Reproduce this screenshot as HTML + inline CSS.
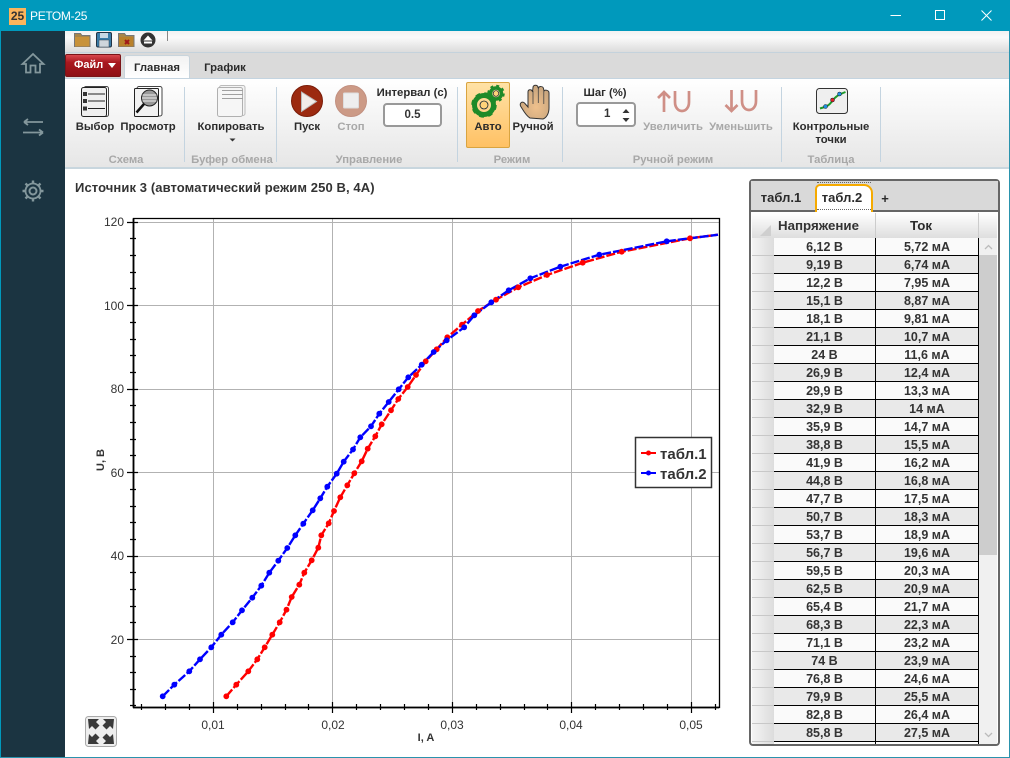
<!DOCTYPE html>
<html><head><meta charset="utf-8">
<style>
html,body{margin:0;padding:0;width:1010px;height:758px;overflow:hidden;background:#fff}
body{position:relative;font-family:"Liberation Sans",sans-serif;color:#2b2b2b}
.a{position:absolute}
.t{position:absolute;white-space:nowrap;font-weight:bold;font-size:11.3px;line-height:14px;transform:translateX(-50%);color:#2b2b2b}
.g{color:#a8a8a8}
.sep{position:absolute;top:87px;height:75px;width:1px;background:#c4d4e0}
.r{position:absolute;left:774px;width:205px;height:18px;box-sizing:border-box;border-bottom:1px solid #000;display:flex;font-weight:bold;font-size:12.5px;line-height:18px;color:#333;text-align:center}
.r b{flex:none;width:101px;border-right:1px solid #000;display:block}
.r i{flex:none;font-style:normal;display:block;width:102px;border-right:1px solid #000}
.e{background:#e9e9e9}.o{background:#fafafa}
svg{position:absolute;overflow:visible}
.m circle{r:2.9px}
</style></head><body>
<!-- frame -->
<div class="a" style="left:0;top:0;width:1010px;height:31px;background:#0099bc"></div>
<div class="a" style="left:0;top:31px;width:65px;height:727px;background:#1b3441;border-left:1px solid #0099bc;box-sizing:border-box"></div>
<div class="a" style="left:0;top:757px;width:1010px;height:1px;background:#2a93ad"></div>
<div class="a" style="left:1009px;top:31px;width:1px;height:727px;background:#2a93ad"></div>
<div class="a" style="left:9px;top:8px;width:17px;height:17px;background:#fbb55c;color:#333;font:bold 12px/17px 'Liberation Sans',sans-serif;text-align:center">25</div>
<div class="a" style="left:30px;top:8px;color:#fff;font-size:12px;line-height:17px;letter-spacing:-.3px">РЕТОМ-25</div>
<svg style="left:880px;top:0" width="130" height="31" fill="none" stroke="#fff" stroke-width="1"><path d="M10.500 15.500H21"/><rect x="55.500" y="10.500" width="9" height="9"/><path d="M101.500 10.500l10 10M111.500 10.500l-10 10"/></svg>
<!-- sidebar icons -->
<svg style="left:0;top:0" width="65" height="210" fill="none" stroke="#83979c" stroke-width="2"><path d="M22.500 64L33 54 43.500 64H40V72.500H35.500V65.500H30.500V72.500H26V64Z" stroke-width="1.800"/><path d="M24 122H43M24 122l4-3M24 122l4 3M23 132.500H43M43 132.500l-4-3M43 132.500l-4 3" stroke-width="1.800"/><circle cx="33" cy="191" r="3.500"/><circle cx="33" cy="191" r="7.500" stroke-width="1.800"/><path d="M33 180.500v3M33 198.500v3M22.500 191h3M40.500 191h3M25.500 183.500l2.200 2.200M38.300 196.300l2.200 2.200M40.500 183.500l-2.200 2.200M27.700 196.300l-2.200 2.200" stroke-width="2.400"/></svg>
<!-- quick toolbar -->
<div class="a" style="left:65px;top:31px;width:944px;height:22px;background:linear-gradient(#f2f2f2,#fafafa 30%,#dcdcdc);border-bottom:1px solid #c4d2dc;box-sizing:border-box"></div>
<div class="a" style="left:167px;top:31px;width:1px;height:10px;background:#888"></div>
<svg style="left:0;top:0" width="170" height="50"><path d="M74.500 33.500h6l1.500 2h8v11h-15.500z" fill="#a8864a" stroke="#777"/><path d="M75 37h14.500v9.500H75z" fill="#c8923a"/>
<rect x="96.500" y="32.500" width="15" height="14.500" rx="1.500" fill="#3a7ca8" stroke="#234"/><rect x="100" y="33" width="8" height="5" fill="#c8d8e4"/><rect x="99" y="40" width="10" height="7" fill="#cfd6dc" stroke="#345" stroke-width=".5"/>
<path d="M118.500 33.500h6l1.500 2h8v11h-15.500z" fill="#a8864a" stroke="#777"/><path d="M119 37h14.500v9.500H119z" fill="#b9812b"/><path d="M125 40l4 4M129 40l-4 4" stroke="#a01818" stroke-width="2"/>
<circle cx="148" cy="40" r="7.500" fill="#333"/><path d="M148 35.500l4.500 5h-9z" fill="#fff"/><rect x="144" y="41.500" width="8" height="2" fill="#fff"/></svg>
<!-- tab row -->
<div class="a" style="left:65px;top:53px;width:944px;height:25px;background:#dadada"></div>
<div class="a" style="left:65px;top:54px;width:56px;height:23px;box-sizing:border-box;border:1px solid #7a1418;border-radius:2px;background:linear-gradient(#d8474d 0,#a9181f 35%,#8e1015 100%);color:#fff;font:bold 11px/20px 'Liberation Sans',sans-serif;padding-left:8px">Файл</div>
<svg style="left:108px;top:63px" width="10" height="6"><path d="M0 0h8l-4 5z" fill="#fff"/></svg>
<div class="a" style="left:124px;top:55px;width:66px;height:24px;box-sizing:border-box;border:1px solid #c8d4dc;border-bottom:0;border-radius:3px 3px 0 0;background:linear-gradient(#f2f2f2,#fff)"></div>
<div class="t" style="left:157px;top:61px">Главная</div>
<div class="t" style="left:225px;top:61px">График</div>
<!-- ribbon -->
<div class="a" style="left:65px;top:78px;width:944px;height:91px;box-sizing:border-box;border-top:1px solid #c4d4e0;border-bottom:2px solid #c8d6de;background:linear-gradient(#fff,#e6e6e6)"></div>
<div class="sep" style="left:184px"></div><div class="sep" style="left:276px"></div><div class="sep" style="left:457px"></div><div class="sep" style="left:562px"></div><div class="sep" style="left:781px"></div><div class="sep" style="left:880px"></div>
<div class="a" style="left:466px;top:82px;width:44px;height:66px;box-sizing:border-box;border:1px solid #d9a440;border-radius:2px;background:linear-gradient(#ffe2a6,#ffc164)"></div>
<svg style="left:0;top:0" width="1010" height="170">
<defs><radialGradient id="hg" cx=".55" cy=".65" r=".6"><stop offset="0" stop-color="#efc08c"/><stop offset="1" stop-color="#c9a67e"/></radialGradient></defs>
<!-- Выбор -->
<rect x="84" y="86.500" width="24.500" height="30" rx="2" fill="#fff" stroke="#444"/>
<rect x="81.500" y="87.500" width="25" height="29" rx="2" fill="#efefef" stroke="#222"/>
<g fill="#333"><rect x="83" y="92" width="4" height="4"/><rect x="83" y="99" width="4" height="4"/><rect x="83" y="106.500" width="4" height="4"/></g>
<path d="M88 94h17M88 101h17M88 108.500h17" stroke="#222" stroke-width="1"/>
<!-- Просмотр -->
<rect x="137" y="86.500" width="25" height="29.500" rx="2" fill="#fff" stroke="#444"/>
<rect x="134.500" y="88.500" width="24" height="28" rx="1" fill="#f2f2f2" stroke="#222"/>
<circle cx="149.500" cy="98" r="8" fill="#999" stroke="#222"/><path d="M142.500 95h14M142 98h15M142.500 101h14" stroke="#eee"/><path d="M144 104l-7.500 8.500" stroke="#111" stroke-width="2.500"/>
<!-- Копировать -->
<rect x="219.500" y="85.500" width="25.500" height="30" rx="2" fill="#f4f4f4" stroke="#bbb"/><rect x="217.500" y="87.500" width="25" height="29" rx="2" fill="#f6f6f6" stroke="#b0b0b0"/><path d="M222 90.500h21M222 94.500h21M222 98.500h21" stroke="#a0a0a0"/>
<path d="M229.500 138.500h6l-3 3z" fill="#333"/>
<!-- Пуск -->
<circle cx="307" cy="101" r="15.500" fill="#9c2a10" stroke="#7a1c08"/><path d="M301.500 92l15 9.500-15 10z" fill="#f2ece8" stroke="#bbb"/>
<!-- Стоп -->
<circle cx="351" cy="101" r="15.500" fill="#cc9a86" stroke="#c29080"/><rect x="343.500" y="93" width="15" height="15" rx="1" fill="#eee" stroke="#ddd"/>
<!-- Авто gears -->
<circle cx="484" cy="105" r="9.500" fill="none" stroke="#1e8a28" stroke-width="5"/>
<circle cx="484" cy="105" r="11" fill="none" stroke="#1e8a28" stroke-width="3.500" stroke-dasharray="4.500 4.140"/>
<circle cx="484" cy="105" r="4" fill="#ffd27a" stroke="#123" stroke-width=".8"/>
<circle cx="496" cy="93.500" r="5.500" fill="none" stroke="#1e8a28" stroke-width="3.500"/>
<circle cx="496" cy="93.500" r="7.500" fill="none" stroke="#1e8a28" stroke-width="2.500" stroke-dasharray="2.900 2.990"/>
<circle cx="496" cy="93.500" r="2.800" fill="#ffd27a" stroke="#123" stroke-width=".7"/>
<!-- Ручной hand -->
<path d="M530 118C526 116 523 110 520.500 106C519.500 103 522 101 524.500 103L528 107L528 92C528 89 532 89 532.500 92L533 87.500C533 84.500 538 84.500 538 87.500L538.500 88C539 86 543 86 543.500 88.500L544 91C545 89.500 549 90 549 93L549 108C549 114 546 118 543 119Z" fill="url(#hg)" stroke="#333"/>
<path d="M533 91v13M538.300 88v15M543.800 91v13" stroke="#444" stroke-width=".8" fill="none"/>
<!-- up / down U -->
<g fill="none" stroke="#cf8f86" stroke-width="2.700"><path d="M664 112V92M658 98l6-6 6 6"/><path d="M675 91v11c0 12 14 12 14 0V91"/>
<path d="M731.500 90v21M725.500 105l6 6 6-6"/><path d="M742 90v11c0 12 14 12 14 0V90"/></g>
<!-- control points -->
<rect x="816.500" y="88.500" width="31" height="25" rx="3" fill="#efefef" stroke="#333"/>
<path d="M820 108.500c6-2 8-2 12-7 3-5 7-7 13.500-9.500" fill="none" stroke="#1e9a2a" stroke-width="2"/>
<circle cx="825.500" cy="106.500" r="2" fill="#2090e0" stroke="#123" stroke-width=".5"/><circle cx="832.500" cy="100" r="2" fill="#e02020" stroke="#123" stroke-width=".5"/><circle cx="839.500" cy="94" r="2" fill="#2090e0" stroke="#123" stroke-width=".5"/>
</svg>
<div class="t" style="left:95px;top:120px">Выбор</div>
<div class="t" style="left:148px;top:120px">Просмотр</div>
<div class="t" style="left:231px;top:120px">Копировать</div>
<div class="t" style="left:307px;top:120px">Пуск</div>
<div class="t g" style="left:351px;top:120px">Стоп</div>
<div class="t" style="left:412px;top:86px">Интервал (с)</div>
<div class="a" style="left:383px;top:103px;width:59px;height:24px;box-sizing:border-box;border:2px solid #999;border-radius:4px;background:#fff;text-align:center;font:bold 11.5px/20px 'Liberation Sans',sans-serif;color:#333">0.5</div>
<div class="t" style="left:488px;top:120px">Авто</div>
<div class="t" style="left:533px;top:120px">Ручной</div>
<div class="t" style="left:605px;top:86px">Шаг (%)</div>
<div class="a" style="left:576px;top:102px;width:60px;height:25px;box-sizing:border-box;border:2px solid #999;border-radius:4px;background:#fff;font:bold 11.5px/21px 'Liberation Sans',sans-serif;color:#333;padding-left:26px">1</div>
<svg style="left:0;top:0" width="640" height="130"><path d="M622.500 113l3.500-4 3.500 4zM622.500 118l3.500 4 3.500-4z" fill="#333"/></svg>
<div class="t g" style="left:673px;top:120px">Увеличить</div>
<div class="t g" style="left:741px;top:120px">Уменьшить</div>
<div class="t" style="left:831px;top:120px">Контрольные</div>
<div class="t" style="left:831px;top:133px">точки</div>
<div class="t g" style="left:126px;top:153px">Схема</div>
<div class="t g" style="left:232px;top:153px">Буфер обмена</div>
<div class="t g" style="left:369px;top:153px">Управление</div>
<div class="t g" style="left:512px;top:153px">Режим</div>
<div class="t g" style="left:673px;top:153px">Ручной режим</div>
<div class="t g" style="left:831px;top:153px">Таблица</div>
<!-- title -->
<div class="a" style="left:75px;top:180px;font-weight:bold;font-size:13px;letter-spacing:.1px;line-height:15px;white-space:nowrap;color:#333">Источник 3 (автоматический режим 250 В, 4А)</div>
<!-- chart -->
<svg style="left:0;top:0" width="760" height="758">
<g stroke="#b2b2b2" stroke-width="1" fill="none"><path d="M213.500 218V707M332.500 218V707M452.500 218V707M571.500 218V707M691.500 218V707"/><path d="M133 222.500H719M133 305.500H719M133 389.500H719M133 472.500H719M133 556.500H719M133 639.500H719"/></g>
<path d="M133.500 218.500H719.500V707.500H133.500Z" fill="none" stroke="#000" stroke-width="1.300"/>
<g stroke="#000" stroke-width="1.200" fill="none">
<path d="M133.500 707.500V218.500" stroke-width="1.800"/><path d="M133 707.500H719" stroke-width="1.800"/>
<path d="M127 222.500h11M127 305.500h11M127 389.500h11M127 472.500h11M127 556.500h11M127 639.500h11"/>
<path d="M130 238.500h6M130 255.500h6M130 272.500h6M130 288.500h6M130 322.500h6M130 339.500h6M130 355.500h6M130 372.500h6M130 405.500h6M130 422.500h6M130 439.500h6M130 455.500h6M130 489.500h6M130 506.500h6M130 522.500h6M130 539.500h6M130 572.500h6M130 589.500h6M130 606.500h6M130 622.500h6M130 656.500h6M130 672.500h6M130 689.500h6M130 705.500h6"/>
<path d="M213.500 702v11M332.500 702v11M452.500 702v11M571.500 702v11M691.500 702v11"/>
<path d="M141.500 704v6M165.500 704v6M189.500 704v6M237.500 704v6M261.500 704v6M285.500 704v6M308.500 704v6M356.500 704v6M380.500 704v6M404.500 704v6M428.500 704v6M476.500 704v6M500.500 704v6M524.500 704v6M547.500 704v6M595.500 704v6M619.500 704v6M643.500 704v6M667.500 704v6M715.500 704v6"/>
</g>
<g font-family="Liberation Sans,sans-serif" font-size="12" fill="#333" text-anchor="end"><text x="124" y="226">120</text><text x="124" y="310">100</text><text x="124" y="393">80</text><text x="124" y="477">60</text><text x="124" y="560">40</text><text x="124" y="644">20</text></g>
<g font-family="Liberation Sans,sans-serif" font-size="12" fill="#333" text-anchor="middle"><text x="213" y="729">0,01</text><text x="333" y="729">0,02</text><text x="452" y="729">0,03</text><text x="571" y="729">0,04</text><text x="691" y="729">0,05</text></g>
<text x="426" y="741" font-family="Liberation Sans,sans-serif" font-size="11" font-weight="bold" fill="#333" text-anchor="middle">I, A</text>
<text transform="translate(104,460) rotate(-90)" font-family="Liberation Sans,sans-serif" font-size="11" font-weight="bold" fill="#333" text-anchor="middle">U, B</text>
<g fill="none" stroke-width="2.400" stroke-dasharray="9 2">
<polyline stroke="#f00" points="226.300,696.300 236.300,684.700 248.300,671.300 257.300,659.300 264.700,647.300 272.300,634.700 279.700,622.300 286.500,609.700 291.700,597 299.300,584.700 304.300,572.700 311.700,560.300 318.300,547.700 321.300,535.300 328.700,523.300 334,511 340.300,497.300 347.300,485.300 354.300,473.300 361.700,461.300 367.700,448.700 375.300,436.300 381.700,424.300 391,410.300 398.300,399 407.700,387 416,375 425.700,361.300 436.700,349.300 447.300,337.300 462,324.700 478,311 496,299.700 518.300,287.300 547,275 582.700,262.700 621.700,251.700 690,238.300 718,234.700"/>
<polyline stroke="#00f" points="162.700,696.300 174.300,684.700 189.300,671.300 200,659.300 211.300,647.300 221.300,634.700 232.700,622.300 242,610.300 252.300,597.700 261.300,585.700 269.300,572.700 278.300,560.700 287.300,548 295.300,535.300 303.300,523.700 312.700,510.300 320.300,498.300 327.300,486.700 336.700,473.700 343.700,461.700 353,449.500 360.300,437.300 371,426.300 379.300,413.700 388.700,402 398.700,389.300 408.300,377.300 421.700,364.700 433.700,352 446.700,340.300 464.200,327.300 474.300,315.300 491.300,302.300 508.700,290.300 530.300,278.300 560.300,266.700 599.300,254.700 621,250.500 666.700,241.300 690,238.300 718,234.700"/>
</g>
<g class="m" fill="#f00"><circle cx="226.300" cy="696.300" r="2.600"/><circle cx="236.300" cy="684.700" r="2.600"/><circle cx="248.300" cy="671.300" r="2.600"/><circle cx="257.300" cy="659.300" r="2.600"/><circle cx="264.700" cy="647.300" r="2.600"/><circle cx="272.300" cy="634.700" r="2.600"/><circle cx="279.700" cy="622.300" r="2.600"/><circle cx="286.500" cy="609.700" r="2.600"/><circle cx="291.700" cy="597" r="2.600"/><circle cx="299.300" cy="584.700" r="2.600"/><circle cx="304.300" cy="572.700" r="2.600"/><circle cx="311.700" cy="560.300" r="2.600"/><circle cx="318.300" cy="547.700" r="2.600"/><circle cx="321.300" cy="535.300" r="2.600"/><circle cx="328.700" cy="523.300" r="2.600"/><circle cx="334" cy="511" r="2.600"/><circle cx="340.300" cy="497.300" r="2.600"/><circle cx="347.300" cy="485.300" r="2.600"/><circle cx="354.300" cy="473.300" r="2.600"/><circle cx="361.700" cy="461.300" r="2.600"/><circle cx="367.700" cy="448.700" r="2.600"/><circle cx="375.300" cy="436.300" r="2.600"/><circle cx="381.700" cy="424.300" r="2.600"/><circle cx="391" cy="410.300" r="2.600"/><circle cx="398.300" cy="399" r="2.600"/><circle cx="407.700" cy="387" r="2.600"/><circle cx="416" cy="375" r="2.600"/><circle cx="425.700" cy="361.300" r="2.600"/><circle cx="436.700" cy="349.300" r="2.600"/><circle cx="447.300" cy="337.300" r="2.600"/><circle cx="462" cy="324.700" r="2.600"/><circle cx="478" cy="311" r="2.600"/><circle cx="496" cy="299.700" r="2.600"/><circle cx="518.300" cy="287.300" r="2.600"/><circle cx="547" cy="275" r="2.600"/><circle cx="582.700" cy="262.700" r="2.600"/><circle cx="621.700" cy="251.700" r="2.600"/><circle cx="690" cy="238.300" r="2.600"/></g>
<g class="m" fill="#00f"><circle cx="162.700" cy="696.300" r="2.600"/><circle cx="174.300" cy="684.700" r="2.600"/><circle cx="189.300" cy="671.300" r="2.600"/><circle cx="200" cy="659.300" r="2.600"/><circle cx="211.300" cy="647.300" r="2.600"/><circle cx="221.300" cy="634.700" r="2.600"/><circle cx="232.700" cy="622.300" r="2.600"/><circle cx="242" cy="610.300" r="2.600"/><circle cx="252.300" cy="597.700" r="2.600"/><circle cx="261.300" cy="585.700" r="2.600"/><circle cx="269.300" cy="572.700" r="2.600"/><circle cx="278.300" cy="560.700" r="2.600"/><circle cx="287.300" cy="548" r="2.600"/><circle cx="295.300" cy="535.300" r="2.600"/><circle cx="303.300" cy="523.700" r="2.600"/><circle cx="312.700" cy="510.300" r="2.600"/><circle cx="320.300" cy="498.300" r="2.600"/><circle cx="327.300" cy="486.700" r="2.600"/><circle cx="336.700" cy="473.700" r="2.600"/><circle cx="343.700" cy="461.700" r="2.600"/><circle cx="353" cy="449.500" r="2.600"/><circle cx="360.300" cy="437.300" r="2.600"/><circle cx="371" cy="426.300" r="2.600"/><circle cx="379.300" cy="413.700" r="2.600"/><circle cx="388.700" cy="402" r="2.600"/><circle cx="398.700" cy="389.300" r="2.600"/><circle cx="408.300" cy="377.300" r="2.600"/><circle cx="421.700" cy="364.700" r="2.600"/><circle cx="433.700" cy="352" r="2.600"/><circle cx="446.700" cy="340.300" r="2.600"/><circle cx="464.200" cy="327.300" r="2.600"/><circle cx="474.300" cy="315.300" r="2.600"/><circle cx="491.300" cy="302.300" r="2.600"/><circle cx="508.700" cy="290.300" r="2.600"/><circle cx="530.300" cy="278.300" r="2.600"/><circle cx="560.300" cy="266.700" r="2.600"/><circle cx="599.300" cy="254.700" r="2.600"/><circle cx="666.700" cy="241.300" r="2.600"/></g>
<rect x="635.500" y="437.500" width="76" height="50" fill="#fff" stroke="#333" stroke-width="1.500"/>
<path d="M641 453h15" stroke="#f00" stroke-width="2"/><circle cx="648.500" cy="453" r="2.500" fill="#f00"/>
<path d="M641 473h15" stroke="#00f" stroke-width="2"/><circle cx="648.500" cy="473" r="2.500" fill="#00f"/>
<g font-family="Liberation Sans,sans-serif" font-size="15" font-weight="bold" fill="#333"><text x="660" y="459">табл.1</text><text x="660" y="479">табл.2</text></g>
<rect x="85.500" y="716.500" width="31" height="30" rx="3" fill="#eee" stroke="#aaa"/>
<g fill="#3a3a3a"><path d="M88 719h11l-3 3 3.500 3.500-4 4L92 726l-3 3z"/><path d="M114 719h-11l3 3-3.500 3.500 4 4L110 726l3 3z"/><path d="M88 744h11l-3-3 3.500-3.500-4-4L92 737l-3-3z"/><path d="M114 744h-11l3-3-3.500-3.500 4-4L110 737l3-3z"/></g>
</svg>
<!-- table panel -->
<div class="a" style="left:749px;top:179px;width:251px;height:567px;box-sizing:border-box;border:2px solid #666;border-radius:4px;background:#fff"></div>
<div class="a" style="left:751px;top:181px;width:247px;height:30px;background:#d9d9d9"></div>
<div class="a" style="left:751px;top:210px;width:247px;height:2px;background:#666"></div>
<div class="a" style="left:815px;top:184px;width:58px;height:28px;box-sizing:border-box;border:2px solid #f5aa00;border-bottom:0;border-radius:5px 9px 0 0;background:#fff"></div>
<div class="a" style="left:817px;top:182px;width:54px;height:28px;box-sizing:border-box;border:1px dotted #666;border-left-width:0;border-right-width:0"></div>
<div class="t" style="left:781px;top:191px;font-size:13px">табл.1</div>
<div class="t" style="left:842px;top:191px;font-size:13px">табл.2</div>
<div class="t" style="left:885px;top:192px;font-size:13px">+</div>
<div class="a" style="left:752px;top:213px;width:245px;height:25px;background:linear-gradient(#fff,#dedede)"></div>
<svg style="left:760px;top:224px" width="12" height="13"><path d="M11 1v11H0z" fill="#cfcfcf"/></svg>
<div class="a" style="left:752px;top:238px;width:22px;height:506px;background:repeating-linear-gradient(transparent 0,transparent 17px,#c8c8c8 17px,#c8c8c8 18px),linear-gradient(90deg,#f4f4f4,#dcdcdc)"></div>
<div class="a" style="left:875px;top:213px;width:1px;height:25px;background:#ccc"></div>
<div class="a" style="left:978px;top:213px;width:1px;height:25px;background:#ccc"></div>
<div class="a" style="left:778px;top:219px;width:81px;overflow:hidden;white-space:nowrap;font-weight:bold;font-size:13.3px;line-height:14px;color:#333">Напряжение</div>
<div class="t" style="left:921px;top:219px;font-size:13.3px">Ток</div>
<div class="a" style="left:979px;top:238px;width:18px;height:506px;background:#f0f0f0"></div>
<div class="a" style="left:979px;top:255px;width:18px;height:300px;background:#cdcdcd"></div>
<svg style="left:979px;top:238px" width="18" height="506" fill="none" stroke="#bbb" stroke-width="1.300"><path d="M6 11l3.500-3.500L13 11M6 495l3.500 3.500L13 495"/></svg>
<div class="r o" style="top:238px"><b>6,12 В</b><i>5,72 мА</i></div>
<div class="r e" style="top:256px"><b>9,19 В</b><i>6,74 мА</i></div>
<div class="r o" style="top:274px"><b>12,2 В</b><i>7,95 мА</i></div>
<div class="r e" style="top:292px"><b>15,1 В</b><i>8,87 мА</i></div>
<div class="r o" style="top:310px"><b>18,1 В</b><i>9,81 мА</i></div>
<div class="r e" style="top:328px"><b>21,1 В</b><i>10,7 мА</i></div>
<div class="r o" style="top:346px"><b>24 В</b><i>11,6 мА</i></div>
<div class="r e" style="top:364px"><b>26,9 В</b><i>12,4 мА</i></div>
<div class="r o" style="top:382px"><b>29,9 В</b><i>13,3 мА</i></div>
<div class="r e" style="top:400px"><b>32,9 В</b><i>14 мА</i></div>
<div class="r o" style="top:418px"><b>35,9 В</b><i>14,7 мА</i></div>
<div class="r e" style="top:436px"><b>38,8 В</b><i>15,5 мА</i></div>
<div class="r o" style="top:454px"><b>41,9 В</b><i>16,2 мА</i></div>
<div class="r e" style="top:472px"><b>44,8 В</b><i>16,8 мА</i></div>
<div class="r o" style="top:490px"><b>47,7 В</b><i>17,5 мА</i></div>
<div class="r e" style="top:508px"><b>50,7 В</b><i>18,3 мА</i></div>
<div class="r o" style="top:526px"><b>53,7 В</b><i>18,9 мА</i></div>
<div class="r e" style="top:544px"><b>56,7 В</b><i>19,6 мА</i></div>
<div class="r o" style="top:562px"><b>59,5 В</b><i>20,3 мА</i></div>
<div class="r e" style="top:580px"><b>62,5 В</b><i>20,9 мА</i></div>
<div class="r o" style="top:598px"><b>65,4 В</b><i>21,7 мА</i></div>
<div class="r e" style="top:616px"><b>68,3 В</b><i>22,3 мА</i></div>
<div class="r o" style="top:634px"><b>71,1 В</b><i>23,2 мА</i></div>
<div class="r e" style="top:652px"><b>74 В</b><i>23,9 мА</i></div>
<div class="r o" style="top:670px"><b>76,8 В</b><i>24,6 мА</i></div>
<div class="r e" style="top:688px"><b>79,9 В</b><i>25,5 мА</i></div>
<div class="r o" style="top:706px"><b>82,8 В</b><i>26,4 мА</i></div>
<div class="r e" style="top:724px"><b>85,8 В</b><i>27,5 мА</i></div>
<div class="a" style="left:875px;top:742px;width:1px;height:2px;background:#000"></div>
<div class="a" style="left:978px;top:742px;width:1px;height:2px;background:#000"></div>
</body></html>
